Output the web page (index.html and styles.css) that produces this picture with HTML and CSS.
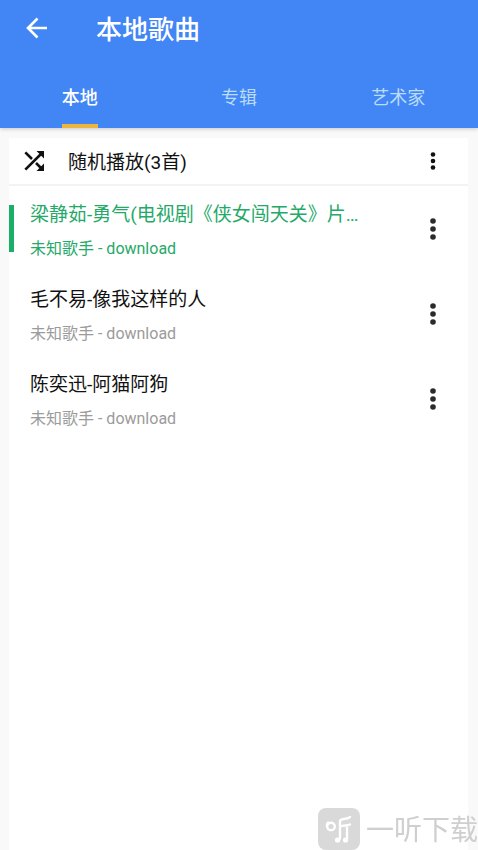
FILE: index.html
```html
<!DOCTYPE html>
<html lang="zh-CN">
<head>
<meta charset="utf-8">
<meta name="viewport" content="width=device-width, initial-scale=1">
<title>本地歌曲</title>
<link rel="stylesheet" href="styles.css">
</head>
<body>
<header class="header">
  <div class="bar">
    <button class="icon-button back" aria-label="返回">
      <svg width="24" height="24" viewBox="0 0 24 24"><path d="M23 12H4M13.500 2.500L4 12l9.500 9.500" fill="none" stroke="currentColor" stroke-width="2.600"/></svg>
    </button>
    <h1 class="title">本地歌曲</h1>
  </div>
  <nav class="tabs">
    <a class="tab active" href="#local"><span class="tab-label">本地</span></a>
    <a class="tab" href="#albums"><span class="tab-label">专辑</span></a>
    <a class="tab" href="#artists"><span class="tab-label">艺术家</span></a>
  </nav>
</header>
<main class="card">
  <div class="shuffle-row">
    <button class="shuffle">
      <svg width="20" height="20" viewBox="0 0 20 20"><path d="M1.300 1.300l6.700 6.700M1.300 18.700L17 3M12 12l5 5" fill="none" stroke="currentColor" stroke-width="2.600"/><path d="M12.500 0H20v7.500zM20 12.500V20h-7.500z" fill="currentColor"/></svg>
      <span class="shuffle-label">随机播放(3首)</span>
    </button>
    <button class="icon-button" aria-label="更多">
      <svg width="8" height="20" viewBox="0 0 8 20" fill="currentColor"><circle cx="4" cy="3.500" r="2.300"/><circle cx="4" cy="10" r="2.300"/><circle cx="4" cy="16.500" r="2.300"/></svg>
    </button>
  </div>
  <ul class="songs">
    <li class="song playing">
      <div class="info"><div class="name">梁静茹-勇气(电视剧《侠女闯天关》片…</div><div class="artist">未知歌手 - download</div></div>
      <button class="icon-button more" aria-label="更多"><svg width="8" height="24" viewBox="0 0 8 24" fill="currentColor"><circle cx="4" cy="4" r="2.800"/><circle cx="4" cy="12" r="2.800"/><circle cx="4" cy="20" r="2.800"/></svg></button>
    </li>
    <li class="song">
      <div class="info"><div class="name">毛不易-像我这样的人</div><div class="artist">未知歌手 - download</div></div>
      <button class="icon-button more" aria-label="更多"><svg width="8" height="24" viewBox="0 0 8 24" fill="currentColor"><circle cx="4" cy="4" r="2.800"/><circle cx="4" cy="12" r="2.800"/><circle cx="4" cy="20" r="2.800"/></svg></button>
    </li>
    <li class="song">
      <div class="info"><div class="name">陈奕迅-阿猫阿狗</div><div class="artist">未知歌手 - download</div></div>
      <button class="icon-button more" aria-label="更多"><svg width="8" height="24" viewBox="0 0 8 24" fill="currentColor"><circle cx="4" cy="4" r="2.800"/><circle cx="4" cy="12" r="2.800"/><circle cx="4" cy="20" r="2.800"/></svg></button>
    </li>
  </ul>
</main>
<div class="watermark">
  <svg width="42" height="42" viewBox="0 0 42 42"><rect width="42" height="42" rx="8" fill="#d9d9d9"/><g fill="none" stroke="#fff" stroke-width="2.400" stroke-linecap="round" stroke-linejoin="round"><circle cx="13" cy="18.500" r="3.800"/><path d="M10 14.500c-1 1-1.300 2.300-1.200 3.500M32 9c-2 2.500-7 1-10 3.500V28c0 2.500-.3 3.500-1 4.500M22 18.500c4-1.500 7-.5 10-2M29 18v14"/></g><circle cx="19.500" cy="32" r="2.600" fill="#fff"/><circle cx="27.500" cy="32" r="2.600" fill="#fff"/></svg>
  <span class="watermark-label">一听下载</span>
</div>
</body>
</html>
```
FILE: styles.css
```css
* {
  box-sizing: border-box;
}

body {
  margin: 0;
  min-height: 100vh;
  display: flex;
  flex-direction: column;
  background: #f9f9f9;
  color: #111;
  font-family: Roboto, "Noto Sans CJK SC", sans-serif;
}

button {
  padding: 0;
  border: 0;
  background: none;
  color: inherit;
  font: inherit;
  cursor: pointer;
}

svg {
  display: block;
}

.header {
  background: #4285f4;
  color: #fff;
  box-shadow: 0 1px 4px rgba(0, 0, 0, 0.2);
}

.bar {
  display: flex;
  align-items: center;
  height: 56px;
  padding: 0 16px;
}

.icon-button {
  display: flex;
  align-items: center;
  justify-content: center;
  width: 40px;
  height: 40px;
}

.title {
  margin: 0 0 0 40px;
  padding-top: 4px;
  font-size: 26px;
  line-height: 40px;
  font-weight: 500;
}

.tabs {
  display: flex;
  padding-top: 8px;
}

.tab {
  flex: 1;
  display: flex;
  justify-content: center;
  height: 64px;
  color: #b9dcfb;
  font-size: 18px;
  line-height: 60px;
  text-decoration: none;
}

.tab-label {
  padding-top: 4px;
}

.tab.active {
  color: #fff;
  font-weight: 500;
}

.tab.active .tab-label {
  border-bottom: 4px solid #ebb63e;
}

.card {
  flex: 1;
  margin: 10px 10px 0 9px;
  background: #fff;
}

.shuffle-row {
  display: flex;
  align-items: center;
  justify-content: space-between;
  height: 48px;
  padding: 0 15px;
  border-bottom: 2px solid #f3f3f3;
}

.shuffle {
  display: flex;
  align-items: center;
  gap: 24px;
  font-size: 19px;
  line-height: 28px;
}

.shuffle-label {
  padding-top: 4px;
}

.songs {
  margin: 0;
  padding: 0;
  list-style: none;
}

.song {
  display: flex;
  align-items: center;
  height: 85px;
  padding: 0 15px 0 0;
}

.info {
  flex: 1;
  min-width: 0;
  padding: 4px 0 0 21px;
}

.name {
  font-size: 19px;
  line-height: 28px;
  white-space: nowrap;
}

.artist {
  margin-top: 8px;
  color: #9b9b9b;
  font-size: 16px;
  line-height: 24px;
}

.playing .info {
  color: #25a969;
}

.playing .artist {
  color: inherit;
}

.playing::before {
  content: "";
  width: 5px;
  height: 47px;
  margin-right: -5px;
  background: #1aae68;
}

.more {
  color: #2b2b2b;
}

.watermark {
  position: fixed;
  right: 0;
  bottom: 0;
  display: flex;
  align-items: center;
  gap: 6px;
  color: #cfcfcf;
  font-size: 28px;
  line-height: 38px;
}

.watermark-label {
  padding-top: 4px;
}
```
